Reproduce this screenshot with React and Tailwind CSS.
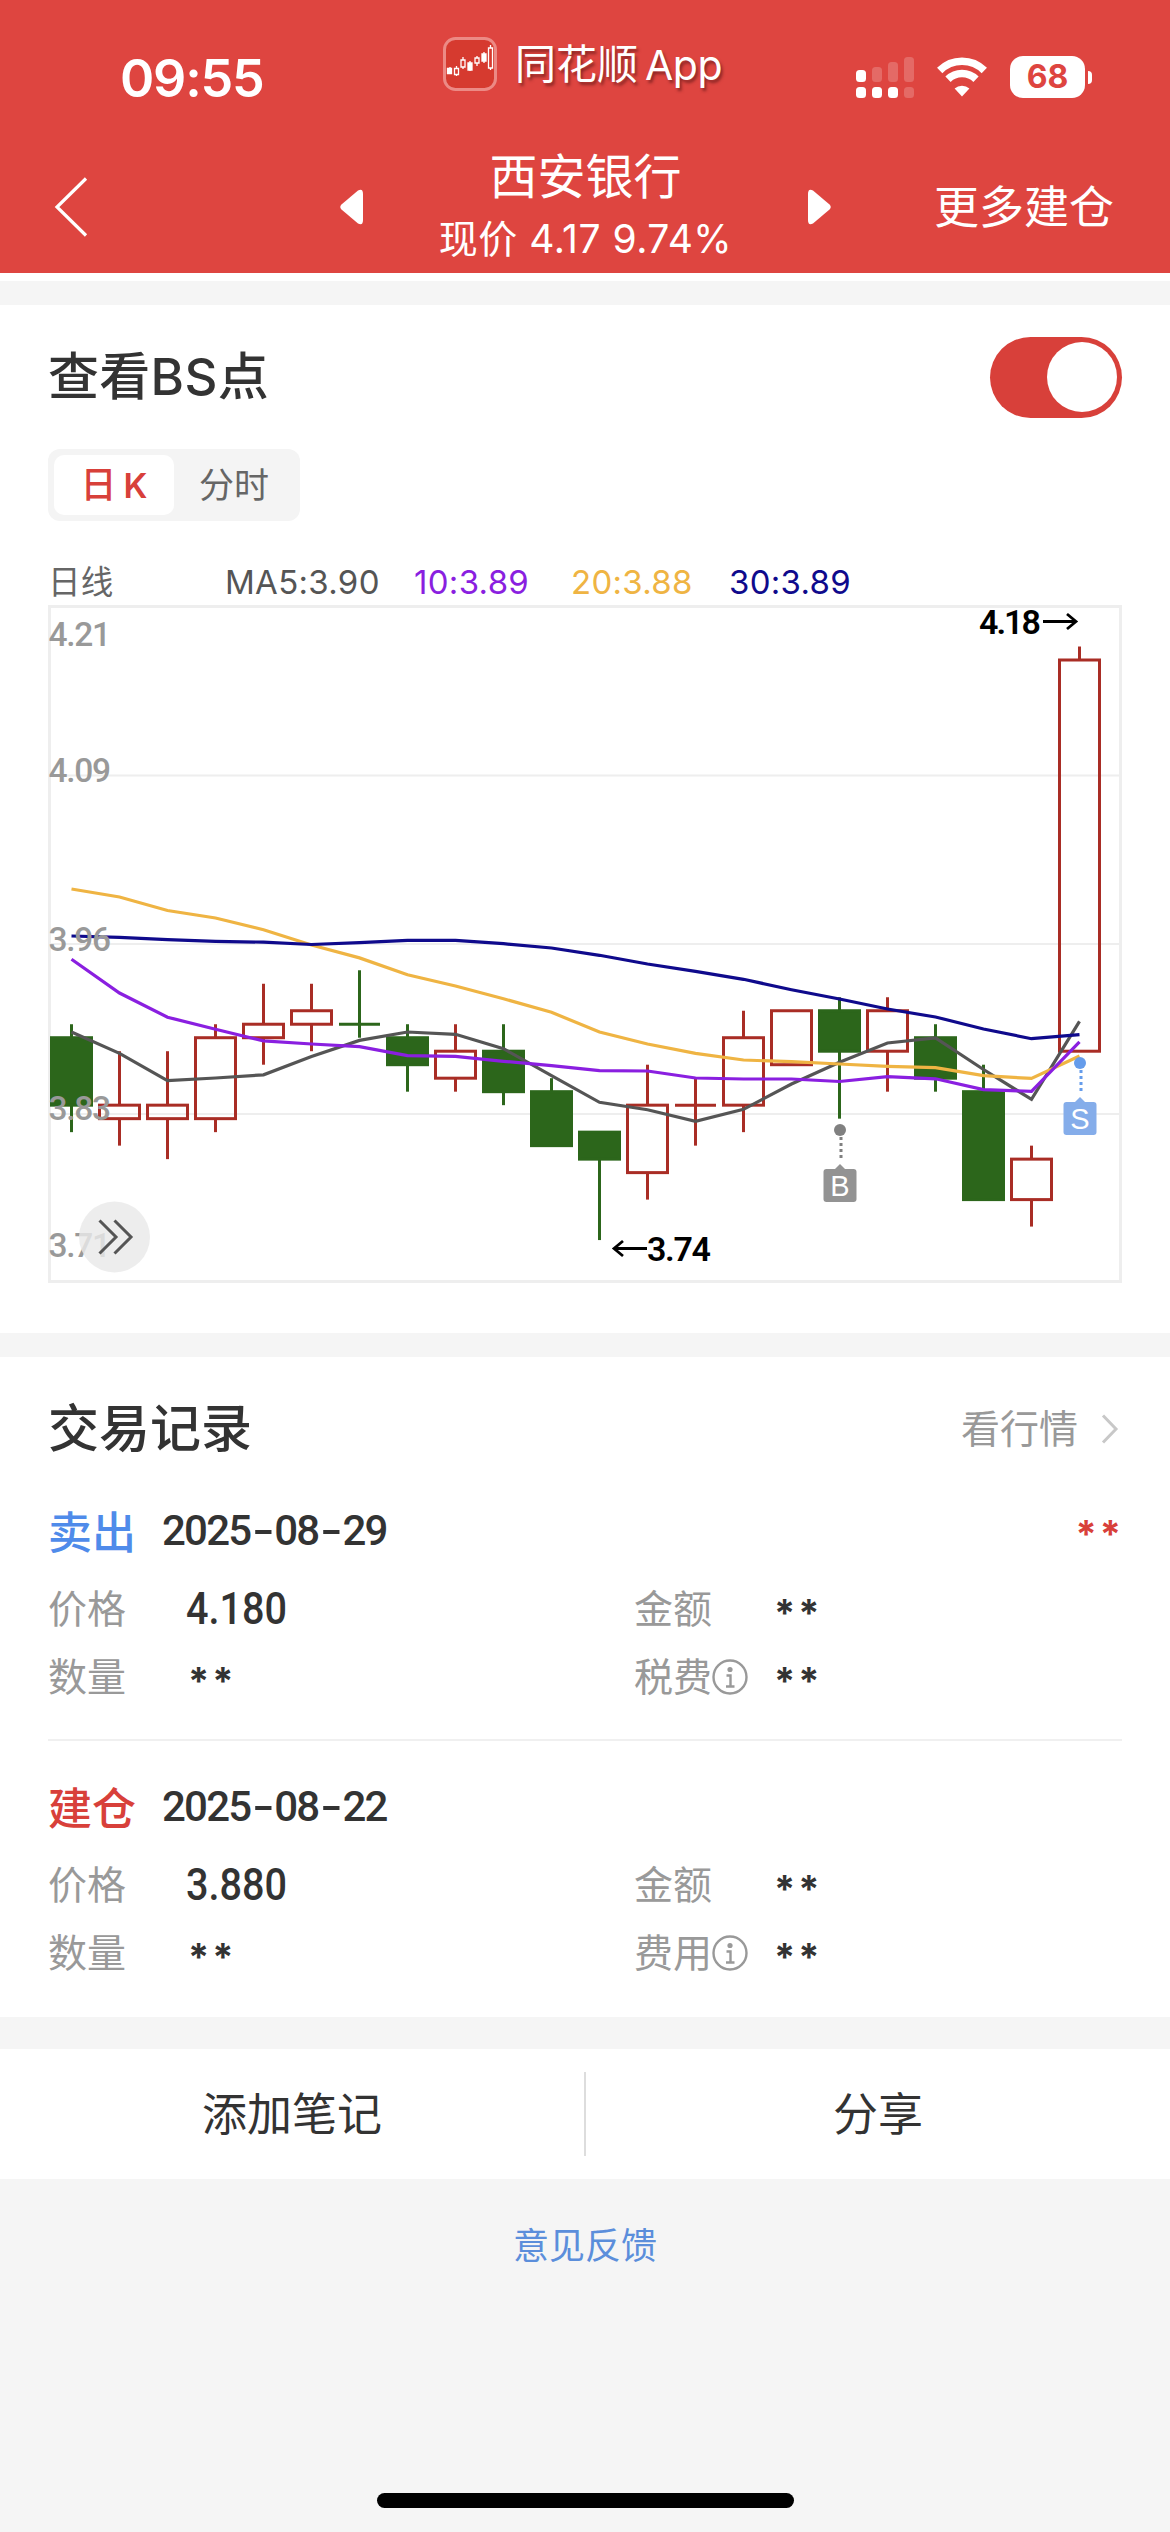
// [open, close, high, low]
const candles = [
  [3.89, 3.84, 3.9, 3.82],
  [3.83, 3.84, 3.88, 3.81],
  [3.83, 3.84, 3.88, 3.8],
  [3.83, 3.89, 3.9, 3.82],
  [3.89, 3.9, 3.93, 3.87],
  [3.9, 3.91, 3.93, 3.88],
  [3.9, 3.9, 3.94, 3.89, "down"],
  [3.89, 3.87, 3.9, 3.85],
  [3.86, 3.88, 3.9, 3.85],
  [3.88, 3.85, 3.9, 3.84],
  [3.85, 3.81, 3.86, 3.81],
  [3.82, 3.8, 3.82, 3.74],
  [3.79, 3.84, 3.87, 3.77],
  [3.84, 3.84, 3.86, 3.81, "up"],
  [3.84, 3.89, 3.91, 3.82],
  [3.87, 3.91, 3.91, 3.87],
  [3.91, 3.88, 3.92, 3.83],
  [3.88, 3.91, 3.92, 3.85],
  [3.89, 3.86, 3.9, 3.85],
  [3.85, 3.77, 3.87, 3.77],
  [3.77, 3.8, 3.81, 3.75],
  [3.88, 4.17, 4.18, 3.88],
];

const lines = [
  {
    color: "#555555",
    ys: [427, 448.4, 475.6, 473, 469.8, 451.5, 435.4, 427, 429.3, 443.7, 470.7, 497.3, 504.7, 516.3, 504.3, 479, 457.3, 438, 432.8, 464.5, 494.4, 416.3],
  },
  {
    color: "#efb443",
    ys: [284, 292, 305.5, 313, 324.7, 340, 352.9, 369.8, 381, 393.7, 407.3, 427, 439, 448.3, 455, 456.7, 459, 461.3, 462.7, 470.7, 473.4, 451],
  },
  {
    color: "#8a1fe0",
    ys: [354.2, 388, 412.2, 424.3, 435.9, 439, 441.7, 450.6, 451.3, 456.3, 460.7, 465.7, 466, 473, 474, 474, 476.5, 471.6, 473.8, 484.6, 486.3, 436.8],
  },
  {
    color: "#0f0a8c",
    ys: [331, 332.3, 334.6, 336.3, 337.2, 339.5, 337.7, 335.4, 335.3, 338.7, 343, 350.3, 359, 366.3, 374.3, 384.7, 394, 404, 412, 424, 433.7, 429.6],
  },
];

const axis = [
  { label: "4.21", y: 41 },
  { label: "4.09", y: 177 },
  { label: "3.96", y: 346 },
  { label: "3.83", y: 515 },
  { label: "3.71", y: 652 },
];

const records = [
  { type: "卖出", color: "text-[#4f8bea]", date: "2025-08-29", profit: true, price: "4.180", feeLabel: "税费" },
  { type: "建仓", color: "text-[#d8403a]", date: "2025-08-22", profit: false, price: "3.880", feeLabel: "费用" },
];

const xOf = (i) => 23.5 + i * 48;
const yOf = (price) => 55 + (4.17 - price) * 1349;

function Candle({ data, i }) {
  const [open, close, high, low, dir] = data;
  const x = xOf(i);
  const top = yOf(Math.max(open, close));
  const bottom = yOf(Math.min(open, close));
  const down = dir ? dir === "down" : close < open;
  const color = down ? "#2c661b" : "#a92d25";

  return (
    <g stroke={color} strokeWidth="3">
      <line x1={x} x2={x} y1={yOf(high)} y2={top} />
      <line x1={x} x2={x} y1={bottom} y2={yOf(low)} />
      {top === bottom ? (
        <line x1={x - 20.5} x2={x + 20.5} y1={top} y2={top} />
      ) : (
        <rect x={x - 20} y={top} width="40" height={bottom - top} fill={down ? color : "none"} />
      )}
    </g>
  );
}

function Marker({ x, y, label, color, dotColor }) {
  return (
    <g>
      <circle cx={x} cy={y} r="6" fill={dotColor} />
      <line x1={x + 1} x2={x + 1} y1={y + 7} y2={y + 29} stroke={dotColor} strokeWidth="3" strokeDasharray="3 3" />
      <path d={`M${x - 6} ${y + 40} L${x} ${y + 34} L${x + 6} ${y + 40} Z`} fill={color} />
      <rect x={x - 16.5} y={y + 39} width="33" height="33" rx="3" fill={color} />
      <text x={x} y={y + 65.5} textAnchor="middle" fill="#fff" className="font-['Liberation_Sans',sans-serif] text-[29px]">
        {label}
      </text>
    </g>
  );
}

function KLineChart() {
  return (
    <svg width="1074" height="678" viewBox="0 0 1074 678" className="block overflow-visible">
      {[170.5, 339, 509].map((y) => (
        <line key={y} x1="0" x2="1074" y1={y} y2={y} stroke="#eeeeee" strokeWidth="2" />
      ))}
      <rect x="1.5" y="1.5" width="1071" height="675" fill="none" stroke="#eeeeee" strokeWidth="3" />
      {candles.map((c, i) => (
        <Candle key={i} data={c} i={i} />
      ))}
      {lines.map((l) => (
        <polyline
          key={l.color}
          points={l.ys.map((y, i) => `${xOf(i)},${y}`).join(" ")}
          fill="none"
          stroke={l.color}
          strokeWidth="3.2"
        />
      ))}
      {axis.map((a) => (
        <text key={a.label} x="0.5" y={a.y} textLength="62.5" fill="#999999" className="font-[Roboto,sans-serif] text-[33.5px] font-medium">
          {a.label}
        </text>
      ))}

      <g className="font-[Roboto,sans-serif] text-[34px] font-semibold">
        <text x="931" y="29" textLength="62">4.18</text>
        <text x="599" y="656" textLength="64">3.74</text>
      </g>
      <g fill="none" stroke="#000" strokeWidth="2.8">
        <path d="M995 16.500 H1028 M1019 9 L1028 16.500 L1019 24" />
        <path d="M599 643.500 H566 M575 636 L566 643.500 L575 651" />
      </g>

      <Marker x={792} y={525} label="B" color="#939393" dotColor="#808080" />
      <Marker x={1032} y={458} label="S" color="#85adea" dotColor="#659ceb" />

      <circle cx="66.5" cy="632" r="35.5" fill="#e9e9e9" fillOpacity="0.82" />
      <path d="M51.500 615.500 L68 632 L51.500 648.500 M66.500 615.500 L83 632 L66.500 648.500" fill="none" stroke="#555" strokeWidth="3" />
    </svg>
  );
}

function StatusBar() {
  return (
    <div className="flex h-[126px] items-start">
      <div className="w-[443px] pl-[120px] pt-[49px] text-[52px] font-semibold leading-[60px] tracking-[-1.2px]">09:55</div>
      <div className="flex w-[413px] items-center gap-[18px] pt-[36px]">
        <svg width="54" height="54" viewBox="0 0 54 54">
          <rect x="1.5" y="1.5" width="51" height="51" rx="11" fill="#d63a2f" stroke="#ec8a85" strokeWidth="3" />
          <g stroke="#fff" strokeWidth="1.3" fill="none">
            <path d="M7 30v7M13.500 29v10M20 20v12M27 24v10M34 19v10M41 15v11M47.500 8v25" />
            <path d="M4.500 31.500h4v5h-4zM25 26h4v7h-4zM39 17h4v7h-4z" fill="#fff" />
            <path d="M11.500 31.500h4v6h-4zM18 23h4v7h-4zM32 21h4v5h-4zM45.500 11h4v20h-4z" fill="#d63a2f" />
          </g>
        </svg>
        <div className="flex items-center gap-[7px] leading-[54px] [text-shadow:2px_3px_3px_rgba(90,20,20,0.6)]">
          <span className="text-[41px]">同花顺</span>
          <span className="pt-[2px] text-[41px] tracking-[-0.5px]">App</span>
        </div>
      </div>
      <div className="flex items-center gap-[23px] pt-[56px]">
        <svg width="58" height="42" viewBox="0 0 58 42" fill="#fff">
          <rect x="0" y="14" width="10" height="12" rx="3.500" />
          <rect x="16" y="11" width="10" height="15" rx="3.500" opacity="0.2" />
          <rect x="32" y="6" width="10" height="20" rx="3.500" opacity="0.2" />
          <rect x="48" y="1" width="10" height="25" rx="3.500" opacity="0.2" />
          <rect x="0" y="31" width="10" height="11" rx="3.500" />
          <rect x="16" y="31" width="10" height="11" rx="3.500" />
          <rect x="32" y="31" width="10" height="11" rx="3.500" />
          <rect x="48" y="31" width="10" height="11" rx="3.500" opacity="0.2" />
        </svg>
        <svg width="50" height="42" viewBox="0 0 50 42" fill="none" stroke="#fff" strokeWidth="7.500">
          <path d="M2.700 14.500 A31.500 31.500 0 0 1 47.300 14.500" />
          <path d="M11 23.200 A20 20 0 0 1 39 23.200" />
          <path d="M25 40.500 L17.600 32.600 A11 11 0 0 1 32.400 32.600 Z" fill="#fff" stroke="none" />
        </svg>
        <div className="flex items-center gap-[3px]">
          <div className="flex h-[42px] w-[75px] items-center justify-center rounded-[13px] bg-white text-[32px] font-bold leading-none text-[#de4540]">68</div>
          <div className="h-[13px] w-[4px] rounded-r-full bg-white" />
        </div>
      </div>
    </div>
  );
}

function NavBar() {
  return (
    <div className="flex h-[147px] items-center">
      <div className="w-[340px] pl-[53px] pt-[14px]">
        <svg width="36" height="60" viewBox="0 0 36 60" fill="none" stroke="#fff" strokeWidth="3.200">
          <path d="M33 1.500 L4 30 L33 58.500" />
        </svg>
      </div>
      <svg width="24" height="36" viewBox="0 0 24 36" fill="#fff" className="mt-[14px]">
        <path d="M1.500 15.500 L18 1.500 Q23 -1 23 5 V31 Q23 37 18 34.500 L1.500 20.500 Q-1 18 1.500 15.500Z" />
      </svg>
      <div className="flex w-[443px] flex-col items-center pt-[16px]">
        <div className="text-[48px] leading-[62px]">西安银行</div>
        <div className="text-[39px] leading-[62px] tracking-[0.5px]">现价 4.17 9.74%</div>
      </div>
      <svg width="24" height="36" viewBox="0 0 24 36" fill="#fff" className="mt-[14px] rotate-180">
        <path d="M1.500 15.500 L18 1.500 Q23 -1 23 5 V31 Q23 37 18 34.500 L1.500 20.500 Q-1 18 1.500 15.500Z" />
      </svg>
      <div className="flex-1 pr-[56px] pt-[16px] text-right text-[45px]">更多建仓</div>
    </div>
  );
}

function Stars({ className = "top-[4px] text-[#333]" }) {
  return <span className={`relative font-['Inter',sans-serif] text-[38px] font-bold leading-none tracking-[3px] ${className}`}>**</span>;
}

function InfoIcon() {
  return (
    <svg width="36" height="36" viewBox="0 0 36 36" fill="none" stroke="#999" strokeWidth="2.400">
      <circle cx="18" cy="18" r="16.500" />
      <circle cx="18" cy="10.500" r="2.600" fill="#999" stroke="none" />
      <path d="M14.500 16.500 H18.500 V27 M14 27.500 H22.500" />
    </svg>
  );
}

function DateText({ value }) {
  const [year, month, day] = value.split("-");
  return (
    <span className="mb-[5px] flex items-center font-[Roboto,sans-serif] text-[42px] font-medium tracking-[-1.8px] text-[#333]">
      {year}
      <span className="inline-block w-[24px] scale-x-150 text-center">-</span>
      {month}
      <span className="inline-block w-[24px] scale-x-150 text-center">-</span>
      {day}
    </span>
  );
}

function Record({ record }) {
  return (
    <div>
      <div className="flex h-[64px] items-center">
        <span className={`w-[114px] text-[44px] font-medium ${record.color}`}>{record.type}</span>
        <DateText value={record.date} />
        {record.profit && <Stars className="-right-[2px] top-[1px] ml-auto text-[#d8403a]" />}
      </div>
      <div className="mt-[10px] grid grid-cols-[138px_448px_140px_1fr] text-[39px] text-[#999]">
        <span className="flex h-[68px] items-center">价格</span>
        <span className="flex h-[68px] items-center">
          <span className="origin-left scale-x-[0.88] font-[Roboto,sans-serif] text-[45px] font-medium text-[#333]">{record.price}</span>
        </span>
        <span className="flex h-[68px] items-center">金额</span>
        <span className="flex h-[68px] items-center"><Stars /></span>
        <span className="flex h-[68px] items-center">数量</span>
        <span className="flex h-[68px] items-center pl-[2px]"><Stars /></span>
        <span className="flex h-[68px] items-center">{record.feeLabel}<InfoIcon /></span>
        <span className="flex h-[68px] items-center"><Stars /></span>
      </div>
    </div>
  );
}

export default function App() {
  return (
    <div className="flex h-[2532px] w-[1170px] flex-col overflow-hidden bg-[#f5f5f5] font-['Inter','Noto_Sans_CJK_SC',sans-serif] text-[#333]">
      <header className="h-[273px] bg-[#de4540] text-white">
        <StatusBar />
        <NavBar />
      </header>
      <div className="h-[8px] bg-white" />

      <section className="mt-[24px] h-[1028px] bg-white px-[48px]">
        <div className="flex h-[144px] items-center justify-between">
          <h2 className="text-[51px] font-medium tracking-[0.3px]">查看BS点</h2>
          <div className="flex h-[81px] w-[132px] items-center justify-end rounded-full bg-[#d8403a] pr-[5px]">
            <div className="size-[70px] rounded-full bg-white" />
          </div>
        </div>
        <div className="flex h-[72px] w-[252px] items-center rounded-[12px] bg-[#f4f4f4] p-[6px] text-[36px] text-[#666]">
          <div className="flex h-[60px] w-[120px] items-center justify-center gap-[7px] rounded-[10px] bg-white font-medium text-[#d8403a]">
            <span>日</span>
            <span className="text-[34px] font-semibold">K</span>
          </div>
          <div className="flex-1 text-center text-[35px]">分时</div>
        </div>
        <div className="mt-[37px] flex h-[47px] items-center pt-[3px] text-[33px] tracking-[0.3px]">
          <span className="w-[177px] text-[32.5px] text-[#666]">日线</span>
          <span className="w-[189px] text-[#555]">MA5:3.90</span>
          <span className="w-[157px] text-[#8a1fe0]">10:3.89</span>
          <span className="w-[158px] text-[#efb443]">20:3.88</span>
          <span className="text-[#0f0a8c]">30:3.89</span>
        </div>
        <KLineChart />
      </section>

      <section className="mt-[24px] h-[660px] bg-white px-[48px]">
        <div className="flex h-[144px] items-center">
          <h2 className="text-[51px] font-medium">交易记录</h2>
          <span className="ml-auto text-[39px] text-[#999]">看行情</span>
          <svg width="18" height="30" viewBox="0 0 18 30" fill="none" stroke="#c8c8c8" strokeWidth="3" className="ml-[23px] mr-[3px]">
            <path d="M2 1.500 L15 15 L2 28.500" />
          </svg>
        </div>
        <Record record={records[0]} />
        <div className="mb-[36px] mt-[28px] h-[2px] bg-[#f0f0f0]" />
        <Record record={records[1]} />
      </section>

      <div className="mt-[32px] flex h-[130px] items-center bg-white text-[45px]">
        <div className="flex-1 pt-[2px] text-center">添加笔记</div>
        <div className="h-[84px] w-[2px] bg-[#ddd]" />
        <div className="flex-1 pt-[2px] text-center">分享</div>
      </div>

      <div className="mt-[36px] text-center text-[36px] leading-[62px] text-[#5b8edb]">意见反馈</div>

      <div className="mx-auto mb-[24px] mt-auto h-[15px] w-[417px] rounded-full bg-black" />
    </div>
  );
}
